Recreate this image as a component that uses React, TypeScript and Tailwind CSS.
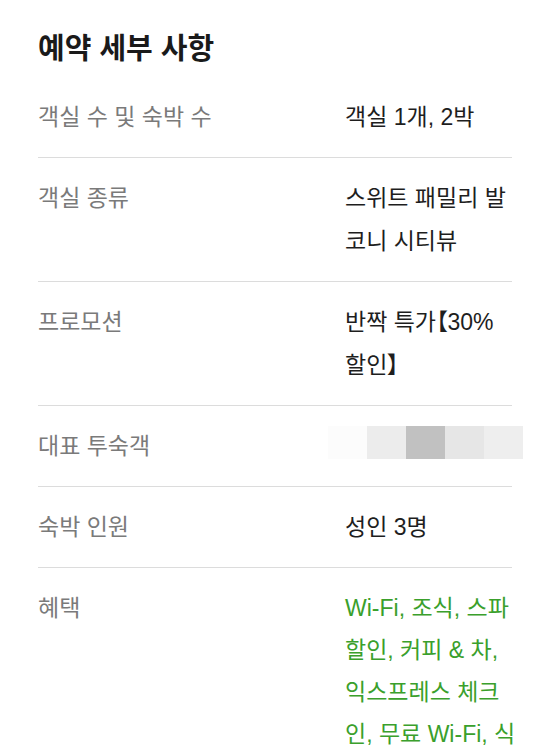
import React from "react";

const font = {
  fontFamily: '"Liberation Sans", "Noto Sans CJK KR", sans-serif',
  fontFeatureSettings: '"palt"',
};

function Row({
  label,
  children,
  last = false,
}: {
  label: string;
  children: React.ReactNode;
  last?: boolean;
}) {
  return (
    <div
      className={`flex w-[474px] pt-[19px] pb-[18px] ${
        last ? "" : "border-b border-[#dcdcdc]"
      }`}
    >
      <div className="w-[307px] shrink-0 text-[23px] leading-[43px] text-[#7a7a7a]">
        {label}
      </div>
      <div className="whitespace-nowrap text-[23px] leading-[43px] text-[#1e1e1e]">
        {children}
      </div>
    </div>
  );
}

export default function App() {
  const blur = ["#fcfcfc", "#ececec", "#c1c1c1", "#e6e6e6", "#eeeeee"];
  return (
    <div className="min-h-[753px] w-[550px] bg-white pl-[38px]" style={font}>
      <h2 className="pt-[31px] mb-[10px] text-[29px] leading-[36px] font-bold text-[#1a1a1a]">
        예약 세부 사항
      </h2>
      <Row label="객실 수 및 숙박 수">객실 1개, 2박</Row>
      <Row label="객실 종류">
        스위트 패밀리 발
        <br />
        코니 시티뷰
      </Row>
      <Row label="프로모션">
        반짝 특가【30%
        <br />
        할인】
      </Row>
      <Row label="대표 투숙객">
        <div className="ml-[-17px] flex h-[43px] pt-[1px]">
          {blur.map((c, i) => (
            <div key={i} className="h-[33px] w-[39px]" style={{ backgroundColor: c }} />
          ))}
        </div>
      </Row>
      <Row label="숙박 인원">성인 3명</Row>
      <Row label="혜택" last>
        <span className="block leading-[42px] text-[#3aa02c]">
          Wi-Fi, 조식, 스파
          <br />
          할인, 커피 &amp; 차,
          <br />
          익스프레스 체크
          <br />
          인, 무료 Wi-Fi, 식
        </span>
      </Row>
    </div>
  );
}
